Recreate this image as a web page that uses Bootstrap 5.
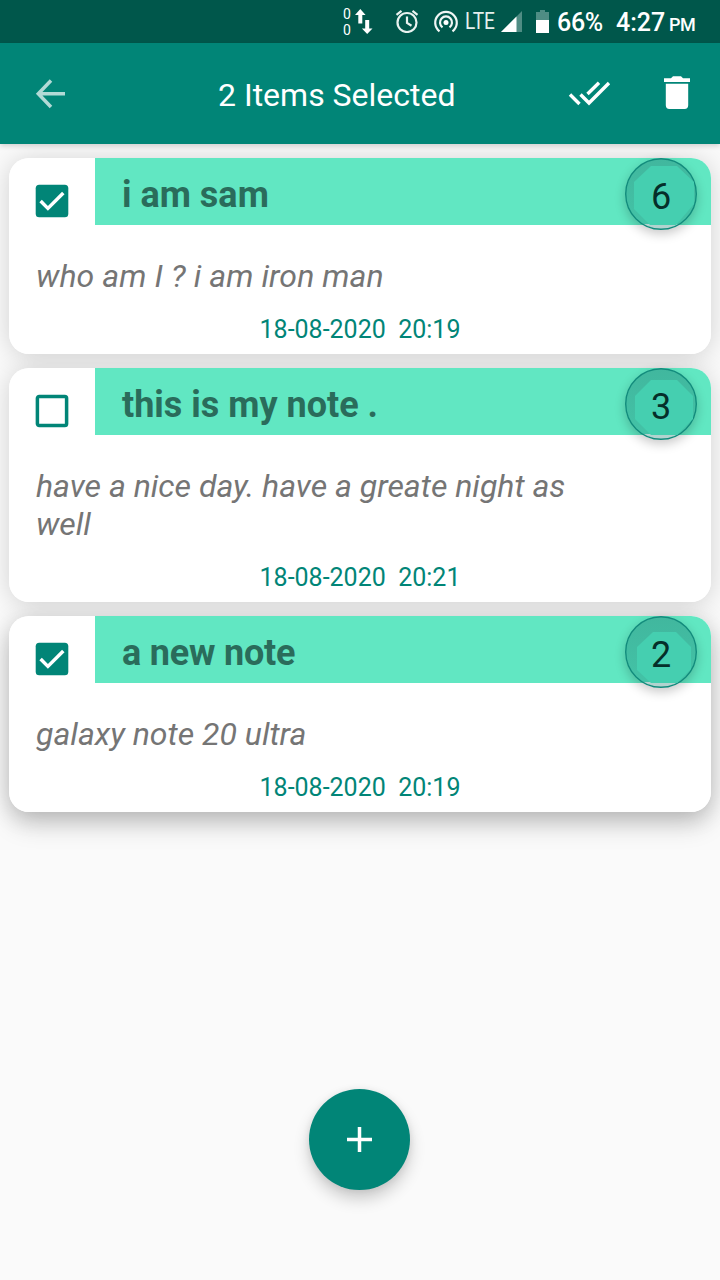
<!DOCTYPE html>
<html lang="en">
<head>
<meta charset="utf-8">
<meta name="viewport" content="width=device-width, initial-scale=1">
<title>Notes</title>
<link href="https://cdn.jsdelivr.net/npm/bootstrap@5.3.0/dist/css/bootstrap.min.css" rel="stylesheet">
<style>
  body { font-family: Roboto, "Noto Sans", sans-serif; background: #fafafa; height: 1280px; overflow: hidden; }
  svg { display: block; flex: none; }
  .statusbar { height: 43px; background: #00574b; color: #fff; padding: 1px 0 0 343px; }
  .net-count { font-size: 14px; line-height: 16px; width: 9px; margin-top: 1px; }
  .lte { font-size: 23px; line-height: 41px; color: #e4efed; margin-left: 6px; width: 36px; transform: scaleX(.83); transform-origin: 0 0; }
  .pct, .clock { font-size: 25px; font-weight: 500; line-height: 44px; white-space: nowrap; }
  .pct { margin-left: 8px; width: 59px; letter-spacing: -.3px; }
  .clock .ampm { font-size: 18px; margin-left: -2.500px; letter-spacing: -.3px; }
  .appbar { height: 101px; background: #018577; color: #fff; box-shadow: 0 2px 5px rgba(0,0,0,.16); z-index: 2; padding: 0 30px; }
  .appbar h1 { font-size: 32px; font-weight: 400; line-height: 38px; margin: 2px 0 0 148px; width: 346px; white-space: nowrap; }
  .notes { position: relative; z-index: 0; padding: 14px 9px 0; gap: 14px; }
  .note { border: 0; border-radius: 20px; height: 196px; }
  .note::before { content: ""; position: absolute; inset: 0; z-index: -1; border-radius: 20px; box-shadow: 0 2px 26px rgba(0,0,0,.17); }
  .note:last-child::before { box-shadow: 0 14px 26px -2px rgba(0,0,0,.18), 0 2px 24px rgba(0,0,0,.17); }
  .note.tall { height: 234px; }
  .note-check { width: 86px; height: 67px; padding: 26px 0 0 26px; }
  .note-title { height: 67px; background: #61e7c2; border-radius: 0 20px 0 0; padding: 0 27px; font-size: 36px; line-height: 74px; font-weight: 700; color: #2a6c5b; }
  .note-text { font-size: 32px; line-height: 38px; font-style: italic; color: #757575; padding: 32px 100px 0 27px; }
  .note-date { font-size: 25px; line-height: 30px; color: #018577; white-space: pre; text-align: center; margin-bottom: 9px; }
  .count { position: absolute; right: 14px; top: 0; width: 72px; height: 72px; border-radius: 50%; box-shadow: 0 4px 11px rgba(0,0,0,.22); font-size: 36px; line-height: 79px; text-align: center; color: #052f2a; }
  .count svg { position: absolute; left: 0; top: 0; }
  .count span { position: relative; }
  .fab { position: absolute; left: 309px; top: 1089px; width: 101px; height: 101px; border: 0; border-radius: 50%; background: #018577; box-shadow: 0 9px 16px rgba(0,0,0,.19), 0 1px 7px rgba(0,0,0,.08); }
</style>
</head>
<body class="d-flex flex-column position-relative">
<svg width="0" height="0" class="position-absolute">
  <linearGradient id="shade" x1="0" y1="0" x2="0" y2="1"><stop offset="0" stop-color="#41b79e"/><stop offset=".9" stop-color="#43c2a6"/><stop offset=".93" stop-color="#43c2a6"/><stop offset=".93" stop-color="#b2d3cf"/></linearGradient>
  <symbol id="checked" viewBox="0 0 34 34"><rect x=".7" y=".7" width="32.6" height="32.6" rx="3.5" fill="#018577"/><path d="M5.6 17.1l7.3 7.3L28.3 9" fill="none" stroke="#fff" stroke-width="3.5"/></symbol>
  <symbol id="unchecked" viewBox="0 0 34 34"><rect x="2.4" y="2.4" width="29.2" height="29.2" rx="1.8" fill="none" stroke="#018577" stroke-width="3.5"/></symbol>
</svg>

<div class="statusbar d-flex flex-shrink-0">
  <div class="net-count pt-1"><div>0</div><div>0</div></div>
  <svg width="19" height="28" viewBox="0 0 19 28" style="margin:7px 0 0 3px" fill="#fff"><path d="M5.300 1l5.300 6H7.300v8.500h-4V7H0zM10.200 12h4v8.500h3.300l-5.300 5.500-5.300-5.500h3.300z"/></svg>
  <svg width="24" height="24" viewBox="0 0 24 24" style="margin:8px 0 0 21px" fill="none" stroke="#e9f2f0" stroke-width="2.200"><circle cx="12" cy="13.500" r="9.500"/><path d="M12 7.500v6.500l4.500 2.800M1.500 5.800l5-4M22.500 5.800l-5-4"/></svg>
  <svg width="26" height="26" viewBox="0 0 26 26" style="margin:8px 0 0 14px" fill="none" stroke="#f0f7f5" stroke-width="2.200"><circle cx="13" cy="13.500" r="2.500" fill="#fff" stroke="none"/><path d="M6.500 22.300a10.800 10.800 0 1 1 13 0M9.500 18.300a6 6 0 1 1 7 0"/></svg>
  <div class="lte">LTE</div>
  <svg width="21" height="21" viewBox="0 0 21 21" style="margin:10px 0 0 0"><path d="M21 0v21H0z" fill="#4f8d84"/><path d="M15.500 5.500V21H0z" fill="#fff"/></svg>
  <svg width="13" height="23" viewBox="0 0 13 23" style="margin:9px 0 0 14px"><path d="M4 0h5v2h4v8H0V2h4z" fill="#4f8d84"/><path d="M0 10h13v13H0z" fill="#fff"/></svg>
  <div class="pct">66%</div>
  <div class="clock">4:27 <span class="ampm">PM</span></div>
</div>

<header class="appbar d-flex align-items-center flex-shrink-0 position-relative">
  <svg width="40" height="40" viewBox="0 0 40 40"><path d="M35 19.700H9M21 6.500L8.300 19.700 21 33" fill="none" stroke="#b2dad6" stroke-width="3.500"/></svg>
  <h1>2 Items Selected</h1>
  <svg width="44" height="30" viewBox="0 0 44 30" style="margin-left:3px" fill="none" stroke="#fff" stroke-width="3.400"><path d="M3 15.500l9.500 9.500M13.500 15.500l8.500 8.500L42 4M20.500 15L32 3.800"/></svg>
  <svg width="26" height="34" viewBox="0 0 26 34" style="margin:0 0 2px auto" fill="#fff"><path d="M0 2.200h7L9 .300h8l2 1.900h7v3.900H0zM1.800 7.800h22.400v21.500q0 3.600-3.600 3.600H5.400q-3.600 0-3.600-3.600z"/></svg>
</header>

<main class="notes d-flex flex-column">
  <article class="note card">
    <div class="d-flex"><div class="note-check"><svg width="34" height="34"><use href="#checked"/></svg></div><div class="note-title flex-fill">i am sam</div></div>
    <div class="count"><svg width="72" height="72"><circle cx="36" cy="36" r="35.300" fill="url(#shade)" stroke="#128b7c" stroke-width="1.400"/><path d="M26 8h26l17 16v22L51 67H25L9 51V24z" fill="#45cfb0"/></svg><span>6</span></div>
    <div class="note-text" style="letter-spacing:.08px">who am I ? i am iron man</div>
    <div class="note-date mt-auto">18-08-2020  20:19</div>
  </article>
  <article class="note tall card">
    <div class="d-flex"><div class="note-check"><svg width="34" height="34"><use href="#unchecked"/></svg></div><div class="note-title flex-fill">this is my note .</div></div>
    <div class="count"><svg width="72" height="72"><circle cx="36" cy="36" r="35.300" fill="url(#shade)" stroke="#128b7c" stroke-width="1.400"/><path d="M26 12h26l16 16v23L52 67H26L10 51V28z" fill="#45cfb0"/></svg><span>3</span></div>
    <div class="note-text">have a nice day. have a greate night as well</div>
    <div class="note-date mt-auto">18-08-2020  20:21</div>
  </article>
  <article class="note card">
    <div class="d-flex"><div class="note-check"><svg width="34" height="34"><use href="#checked"/></svg></div><div class="note-title flex-fill" style="letter-spacing:-.2px">a new note</div></div>
    <div class="count"><svg width="72" height="72"><circle cx="36" cy="36" r="35.300" fill="url(#shade)" stroke="#128b7c" stroke-width="1.400"/><path d="M28 16h23l15 15v22L52 67H26L12 54V31z" fill="#45cfb0"/></svg><span>2</span></div>
    <div class="note-text">galaxy note 20 ultra</div>
    <div class="note-date mt-auto">18-08-2020  20:19</div>
  </article>
</main>

<button class="fab d-flex align-items-center justify-content-center p-0" type="button" aria-label="Add note">
  <svg width="25" height="25" viewBox="0 0 25 25"><path d="M12.500 0v25M0 12.500h25" stroke="#fff" stroke-width="3.500"/></svg>
</button>
<script src="https://cdn.jsdelivr.net/npm/bootstrap@5.3.0/dist/js/bootstrap.bundle.min.js"></script>
</body>
</html>
